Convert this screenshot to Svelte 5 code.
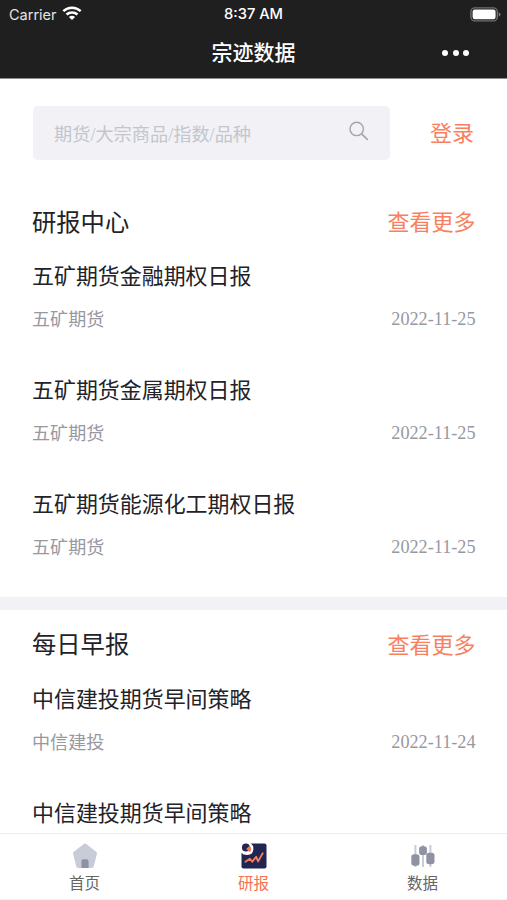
<script>
  const sections = [
    {
      title: '研报中心',
      items: [
        { title: '五矿期货金融期权日报', source: '五矿期货', date: '2022-11-25' },
        { title: '五矿期货金属期权日报', source: '五矿期货', date: '2022-11-25' },
        { title: '五矿期货能源化工期权日报', source: '五矿期货', date: '2022-11-25' }
      ]
    },
    {
      title: '每日早报',
      items: [
        { title: '中信建投期货早间策略', source: '中信建投', date: '2022-11-24' },
        { title: '中信建投期货早间策略' }
      ]
    }
  ];
</script>

<div class="app">
  <header>
    <div class="status">
      <div class="carrier">
        <span>Carrier</span>
        <svg width="20" height="15" viewBox="0 0 20 15" fill="none" stroke="#fff" stroke-width="2.5">
          <path d="M1.3 5.2C6.3 .5 13.7 .5 18.7 5.2" />
          <path d="M4.5 8.5C7.6 5.7 12.4 5.7 15.5 8.5" />
          <path d="M10 14L6.9 10.9C8.6 9.3 11.4 9.3 13.1 10.9Z" fill="#fff" stroke="none" />
        </svg>
      </div>
      <span class="time">8:37 AM</span>
      <svg class="battery" width="31" height="15" viewBox="0 0 31 15">
        <rect x=".9" y=".9" width="26.4" height="13" rx="4" fill="#1f1f1f" stroke="#707070" stroke-width="1.4" />
        <rect x="2.6" y="2.6" width="23" height="9.6" rx="2.2" fill="#fff" />
        <path d="M28.6 5.2Q30.6 6 30.6 7.4T28.6 9.6Z" fill="#777" />
      </svg>
    </div>
    <div class="nav">
      <h1>宗迹数据</h1>
      <div class="dots"><i></i><i></i><i></i></div>
    </div>
  </header>

  <main>
    <div class="search-row">
      <div class="search">
        <span>期货/大宗商品/指数/品种</span>
        <svg width="20" height="20" viewBox="0 0 20 20" fill="none" stroke="#a5a5aa" stroke-width="1.4" stroke-linecap="round">
          <circle cx="7.7" cy="7.9" r="6.7" />
          <path d="M12.6 12.8L18.3 18.3" stroke-width="1.7" />
        </svg>
      </div>
      <span class="login">登录</span>
    </div>

    {#each sections as section}
      <section>
        <div class="head">
          <h2>{section.title}</h2>
          <span class="more">查看更多</span>
        </div>
        {#each section.items as item}
          <article>
            <h3>{item.title}</h3>
            {#if item.date}
              <div class="meta"><span>{item.source}</span><time>{item.date}</time></div>
            {/if}
          </article>
        {/each}
      </section>
    {/each}
  </main>

  <footer>
    <div class="tab">
      <svg width="26" height="26" viewBox="0 0 26 26">
        <path d="M11.8 1Q13 .2 14.2 1L24.2 8.8Q25.3 9.8 24.9 11L21.7 23.4Q21.3 25 19.8 25H6.2Q4.7 25 4.3 23.4L1.1 11Q.7 9.8 1.8 8.8Z" fill="#c8cbd8" />
        <path d="M9.4 25V18.5Q9.4 16.2 11.7 16.2H14.3Q16.6 16.2 16.6 18.5V25Z" fill="#8f92a2" />
      </svg>
      <span>首页</span>
    </div>
    <div class="tab active">
      <svg width="26" height="26" viewBox="0 0 26 26">
        <rect x=".5" y=".5" width="25" height="25" rx="2" fill="#202650" />
        <path d="M0 0H9.5Q12.4 2.2 12.4 5.8Q12.4 12 6 12Q2 12 0 9.4Z" fill="#fff" />
        <circle cx="4.9" cy="4.6" r="4" fill="#202650" />
        <path d="M5.1 5.9L9 2.4Q11.4 5.6 8.9 9.3Z" fill="#f17b60" />
        <path d="M4.5 18.8L8.8 15.8L11.3 18.7L15.2 13.8L17.1 18.4L21.7 10.3" fill="none" stroke="#f17b60" stroke-width="1.9" stroke-linejoin="round" stroke-linecap="round" />
      </svg>
      <span>研报</span>
    </div>
    <div class="tab">
      <svg width="26" height="26" viewBox="0 0 26 26">
        <path d="M5.4 2V24M13 2V24M20.4 2V24" stroke="#c8cbd8" stroke-width="2" />
        <rect x="1.3" y="11.3" width="8.2" height="11.5" rx="2.8" fill="#8f92a2" />
        <rect x="9.1" y="3.3" width="7.8" height="8.8" rx="2.8" fill="#8f92a2" />
        <rect x="16.3" y="9.8" width="8.2" height="11.5" rx="2.8" fill="#8f92a2" />
      </svg>
      <span>数据</span>
    </div>
  </footer>
</div>

<style>
  :global(body) { background: #fff; }
  .app {
    width: 507px;
    height: 900px;
    display: flex;
    flex-direction: column;
    overflow: hidden;
    background: #fff;
    color: #222228;
    font-family: "Liberation Serif", "Noto Sans CJK SC", serif;
  }
  h1, h2, h3 { margin: 0; font-weight: 400; }
  svg { display: block; flex: none; }
  header {
    flex: none;
    height: 79px;
    box-sizing: border-box;
    background: #1f1f1f;
    border-bottom: 1px solid #8c8c8c;
    color: #fff;
  }
  .status {
    height: 27px;
    display: grid;
    grid-template-columns: 1fr auto 1fr;
    align-items: center;
    padding: 0 6px;
    font: 14.5px/27px Inter, sans-serif;
  }
  .carrier { display: flex; align-items: center; gap: 5px; padding-left: 3px; color: #e4e4e4; }
  .carrier svg { margin-top: -1px; }
  .time { font-weight: 500; font-size: 14.7px; line-height: 28px; }
  .battery { justify-self: end; }
  .nav {
    height: 51px;
    display: grid;
    grid-template-columns: 1fr auto 1fr;
    align-items: center;
  }
  h1 { grid-column: 2; font-size: 21px; line-height: 53px; font-weight: 500; }
  .dots { justify-self: end; display: flex; gap: 4.5px; margin: -2px 38px 0 0; }
  .dots i { width: 6px; height: 6px; border-radius: 50%; background: #fff; }
  main { flex: 1; min-height: 0; overflow: hidden; }
  .search-row {
    display: flex;
    align-items: center;
    justify-content: space-between;
    padding: 27px 33px 0;
  }
  .search {
    width: 357px;
    height: 54px;
    box-sizing: border-box;
    padding: 0 21.5px 0 21px;
    display: flex;
    align-items: center;
    justify-content: space-between;
    border-radius: 5px;
    background: #f1f1f6;
    color: #c3c6cc;
    font-size: 18.2px;
  }
  .search svg { margin-top: -5px; }
  .login, .more { color: #f9805f; font-size: 22px; }
  .login { margin-top: -4px; }
  section { padding: 32px 31.5px 0 32px; }
  section + section { padding-top: 5px; border-top: 13px solid #f1f1f6; }
  .head {
    height: 56px;
    display: flex;
    align-items: center;
    justify-content: space-between;
    margin-bottom: 3px;
  }
  h2 { font-size: 24.3px; }
  article { height: 114.2px; }
  article:last-child { height: 117.6px; }
  h3 { font-size: 21.95px; line-height: 52px; }
  .meta {
    display: flex;
    justify-content: space-between;
    color: #98989f;
    font-size: 18.1px;
    line-height: 34px;
  }
  .meta time { font-size: 18.2px; line-height: 32px; }
  footer {
    flex: none;
    height: 67px;
    box-sizing: border-box;
    display: flex;
    border-top: 1px solid #ededf0;
    border-bottom: 1px solid #f2f2f2;
    background: #fff;
  }
  .tab {
    flex: 1;
    display: flex;
    flex-direction: column;
    align-items: center;
    padding-top: 9px;
    color: #666;
    font-size: 15.5px;
    line-height: 29px;
  }
  .active { color: #f9704f; }
</style>
